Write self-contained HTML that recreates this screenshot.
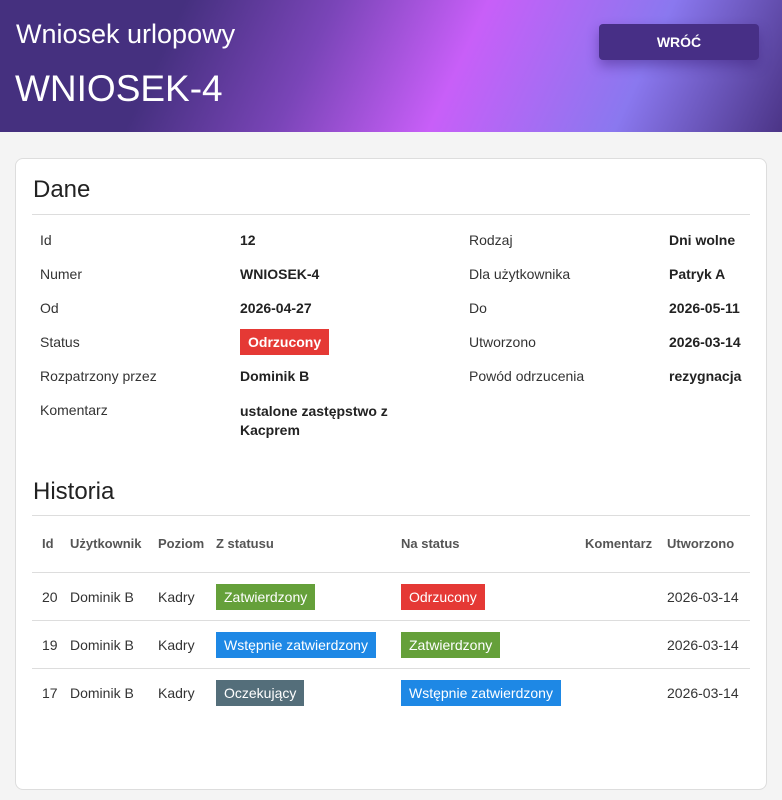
<!DOCTYPE html><html><head><meta charset="utf-8"><style>
*{margin:0;padding:0;box-sizing:border-box}
body{width:782px;height:800px;background:#f4f4f4;font-family:"Liberation Sans",sans-serif;color:#222;position:relative;overflow:hidden}
.hd{position:absolute;left:0;top:0;width:782px;height:132px;background:linear-gradient(115deg,#45307f 0%,#45307f 22%,#7a45b8 40%,#c85ff8 58%,#8a78ef 80%,#4b3486 100%)}
.a{position:absolute;white-space:nowrap}
.btn{position:absolute;left:599px;top:24px;width:160px;height:36px;background:#472f86;border-radius:4px;color:#fff;font-weight:bold;font-size:14px;text-align:center;line-height:36px;box-shadow:0 6px 12px rgba(60,30,120,.45)}
.card{position:absolute;left:15px;top:158px;width:752px;height:632px;background:#fff;border:1px solid #ddd;border-radius:8px}
.h{font-size:24px;color:#222}
.l{font-size:14px;color:#333}
.v{font-size:14px;font-weight:bold;color:#222}
.line{position:absolute;left:32px;width:718px;height:1px;background:#ddd}
.b{position:absolute;height:26px;line-height:26px;padding:0 8px;color:#fff;font-size:14px;white-space:nowrap}
.g{background:#65a03a}.r{background:#e53935}.bl{background:#1e88e5}.gr{background:#546e7a}
.th{font-size:13px;font-weight:bold;color:#555}
</style></head><body>
<div class="hd"></div>
<div class="a" style="left:16px;top:19px;font-size:27px;color:#fff">Wniosek urlopowy</div>
<div class="a" style="left:15px;top:68px;font-size:37px;color:#fff">WNIOSEK-4</div>
<div class="btn">WRÓĆ</div>
<div class="card"></div>
<div class="a h" style="left:33px;top:176px">Dane</div>
<div class="line" style="top:214px"></div>
<div class="a l" style="left:40px;top:232px">Id</div><div class="a v" style="left:240px;top:232px">12</div>
<div class="a l" style="left:469px;top:232px">Rodzaj</div><div class="a v" style="left:669px;top:232px">Dni wolne</div>
<div class="a l" style="left:40px;top:266px">Numer</div><div class="a v" style="left:240px;top:266px">WNIOSEK-4</div>
<div class="a l" style="left:469px;top:266px">Dla użytkownika</div><div class="a v" style="left:669px;top:266px">Patryk A</div>
<div class="a l" style="left:40px;top:300px">Od</div><div class="a v" style="left:240px;top:300px">2026-04-27</div>
<div class="a l" style="left:469px;top:300px">Do</div><div class="a v" style="left:669px;top:300px">2026-05-11</div>
<div class="a l" style="left:40px;top:334px">Status</div><div class="b r" style="left:240px;top:329px;font-weight:bold">Odrzucony</div>
<div class="a l" style="left:469px;top:334px">Utworzono</div><div class="a v" style="left:669px;top:334px">2026-03-14</div>
<div class="a l" style="left:40px;top:368px">Rozpatrzony przez</div><div class="a v" style="left:240px;top:368px">Dominik B</div>
<div class="a l" style="left:469px;top:368px">Powód odrzucenia</div><div class="a v" style="left:669px;top:368px">rezygnacja</div>
<div class="a l" style="left:40px;top:402px">Komentarz</div><div class="a v" style="left:240px;top:402px;line-height:19px">ustalone zastępstwo z<br>Kacprem</div>
<div class="a h" style="left:33px;top:478px">Historia</div>
<div class="line" style="top:515px"></div>
<div class="a th" style="left:42px;top:536px">Id</div>
<div class="a th" style="left:70px;top:536px">Użytkownik</div>
<div class="a th" style="left:158px;top:536px">Poziom</div>
<div class="a th" style="left:216px;top:536px">Z statusu</div>
<div class="a th" style="left:401px;top:536px">Na status</div>
<div class="a th" style="left:585px;top:536px">Komentarz</div>
<div class="a th" style="left:667px;top:536px">Utworzono</div>
<div class="line" style="top:572px"></div>
<div class="a l" style="left:42px;top:589px">20</div><div class="a l" style="left:70px;top:589px">Dominik B</div><div class="a l" style="left:158px;top:589px">Kadry</div>
<div class="b g" style="left:216px;top:584px">Zatwierdzony</div><div class="b r" style="left:401px;top:584px">Odrzucony</div>
<div class="a l" style="left:667px;top:589px">2026-03-14</div>
<div class="line" style="top:620px"></div>
<div class="a l" style="left:42px;top:637px">19</div><div class="a l" style="left:70px;top:637px">Dominik B</div><div class="a l" style="left:158px;top:637px">Kadry</div>
<div class="b bl" style="left:216px;top:632px">Wstępnie zatwierdzony</div><div class="b g" style="left:401px;top:632px">Zatwierdzony</div>
<div class="a l" style="left:667px;top:637px">2026-03-14</div>
<div class="line" style="top:668px"></div>
<div class="a l" style="left:42px;top:685px">17</div><div class="a l" style="left:70px;top:685px">Dominik B</div><div class="a l" style="left:158px;top:685px">Kadry</div>
<div class="b gr" style="left:216px;top:680px">Oczekujący</div><div class="b bl" style="left:401px;top:680px">Wstępnie zatwierdzony</div>
<div class="a l" style="left:667px;top:685px">2026-03-14</div>
</body></html>
